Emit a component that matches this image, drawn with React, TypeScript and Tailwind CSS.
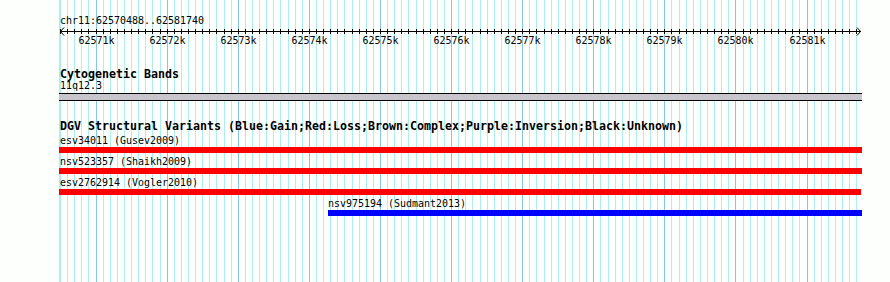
const START = 62570488;
const ORIGIN = 59.6;
const SCALE = 0.07111;

const bpToX = (bp: number) => ORIGIN + (bp - START) * SCALE;

const gridPositions: number[] = [];
for (let p = 62570500; p <= 62581700; p += 100) gridPositions.push(p);

interface Variant {
  id: string;
  label: string;
  left: number;
  right: number;
  color: string;
}

const variants: Variant[] = [
  { id: "esv34011", label: "esv34011 (Gusev2009)", left: 59, right: 862, color: "#ff0000" },
  { id: "nsv523357", label: "nsv523357 (Shaikh2009)", left: 59, right: 862, color: "#ff0000" },
  { id: "esv2762914", label: "esv2762914 (Vogler2010)", left: 59, right: 861, color: "#ff0000" },
  { id: "nsv975194", label: "nsv975194 (Sudmant2013)", left: 328, right: 862, color: "#0000ff" },
];

const mono = "font-['DejaVu_Sans_Mono','Liberation_Mono',monospace]";

function GridAndRuler() {
  return (
    <svg
      className="absolute inset-0"
      width={890}
      height={282}
      viewBox="0 0 890 282"
      xmlns="http://www.w3.org/2000/svg"
    >
      {/* edge line */}
      <line x1={59.5} y1={0} x2={59.5} y2={282} stroke="#afeeee" />
      {gridPositions.map((p) => {
        const x = Math.floor(bpToX(p)) + 0.5;
        const major = p % 1000 === 0;
        return (
          <line
            key={p}
            x1={x}
            y1={0}
            x2={x}
            y2={282}
            stroke={major ? "#87c4ea" : "#afeeee"}
          />
        );
      })}

      {/* ruler */}
      <line x1={60} y1={31.5} x2={861} y2={31.5} stroke="#000" />
      {gridPositions.map((p) => {
        const x = Math.floor(bpToX(p)) + 0.5;
        return <line key={p} x1={x} y1={29} x2={x} y2={34} stroke="#000" />;
      })}
      <polyline points="64,27.5 60.5,31.5 64,35.5" fill="none" stroke="#000" />
      <polyline points="857,27.5 860.5,31.5 857,35.5" fill="none" stroke="#000" />

      {gridPositions
        .filter((p) => p % 1000 === 0)
        .map((p) => (
          <text
            key={p}
            x={Math.floor(bpToX(p)) + 0.5}
            y={44}
            textAnchor="middle"
            fontFamily="'DejaVu Sans Mono', 'Liberation Mono', monospace"
            fontSize={9.97}
            fill="#000"
          >
            {p / 1000}k
          </text>
        ))}
    </svg>
  );
}

export default function App() {
  return (
    <div className="relative w-[890px] h-[282px] overflow-hidden bg-[#fdfffd] text-black">
      <GridAndRuler />

      <div className={`relative flex flex-col ${mono}`}>
        {/* Overview label */}
        <div className="pl-[60px] pt-[15px] text-[9.97px] leading-[12px]">
          chr11:62570488..62581740
        </div>

        {/* Cytogenetic Bands */}
        <div className="mt-[41px] pl-[60px] text-[11.63px] leading-[12px] font-bold">
          Cytogenetic Bands
        </div>
        <div className="pl-[60px] text-[9.97px] leading-[12px]">11q12.3</div>
        <div className="mt-px ml-[59px] w-[803px] h-[8px] border-y border-black bg-[#c6c6cc]" />

        {/* DGV */}
        <div className="mt-[19px] pl-[60px] text-[11.63px] leading-[12px] font-bold whitespace-nowrap">
          DGV Structural Variants (Blue:Gain;Red:Loss;Brown:Complex;Purple:Inversion;Black:Unknown)
        </div>
        <div className="mt-[3px] flex flex-col gap-[3px]">
          {variants.map((v) => (
            <div key={v.id} className="flex flex-col">
              <div
                className="text-[9.97px] leading-[12px] whitespace-nowrap"
                style={{ marginLeft: Math.max(v.left, 60) }}
              >
                {v.label}
              </div>
              <div
                className="h-[6px]"
                style={{
                  marginLeft: v.left,
                  width: v.right - v.left,
                  backgroundColor: v.color,
                }}
              />
            </div>
          ))}
        </div>
      </div>
    </div>
  );
}
